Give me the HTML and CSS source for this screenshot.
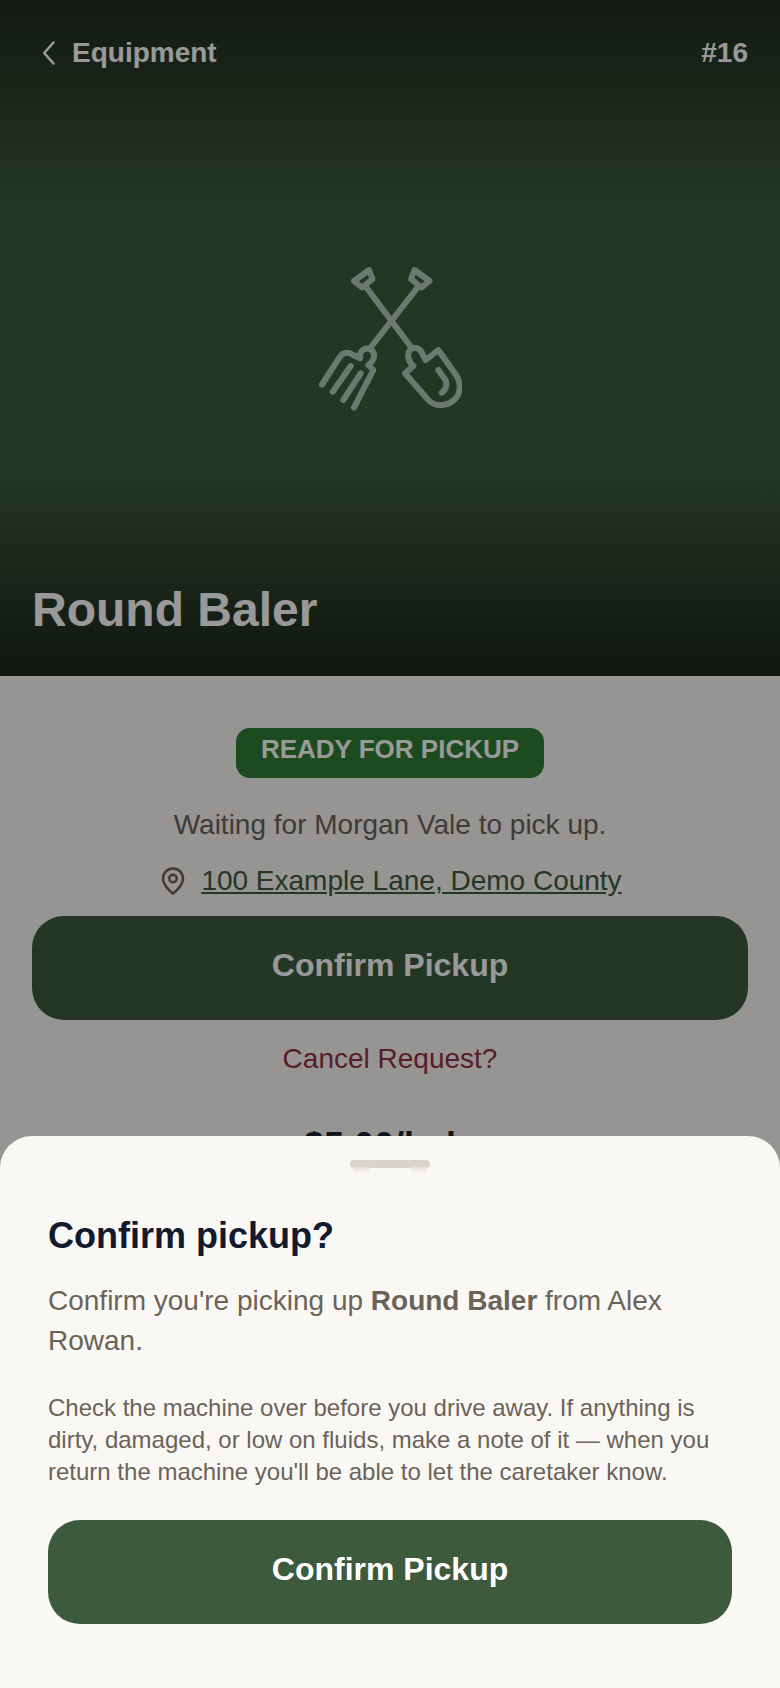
FILE: index.html
```html
<!DOCTYPE html>
<html lang="en">
<head>
<meta charset="utf-8">
<title>Round Baler</title>
<link rel="stylesheet" href="styles.css">
</head>
<body>
<main class="page">
  <header class="hero">
    <nav class="topbar">
      <a class="back">
        <svg class="back-icon" viewBox="0 0 24 24" fill="none" stroke="currentColor" stroke-width="2.2" stroke-linecap="round" stroke-linejoin="round"><path d="M15 3 7 12l8 9"/></svg>
        <span>Equipment</span>
      </a>
      <span class="num">#16</span>
    </nav>
    <div class="hero-art">
      <svg class="tools" viewBox="318 262 144 152" fill="none" stroke="currentColor" stroke-width="6" stroke-linecap="round" stroke-linejoin="round">
        <path d="M369 270 354 281 362 287.5 372.5 279Z"/>
        <path d="M414.5 270 429.5 281 421.5 287.5 411 279Z"/>
        <path d="M366 287 411 347"/>
        <path d="M418 287 371 347"/>
        <path d="M405 373.3 413.3 366C408 361 406.500 354 410 350 413.500 346.500 419 347.500 421.500 352L425.700 360 438.300 350 456 375C461 382 461 392 456 398 449 406 436 408 428.300 400Z"/>
        <path d="M438.300 370 445.500 380C447.500 384 446 390 441.700 392.700"/>
        <path d="M322 384.500 340 356.700C343 352.500 348 351.500 353.300 355L360 358.300C359 352.500 363 348.500 367 348.500 372.500 348.500 375.500 354 373.300 359 372 362 370 364 368.300 365L373.300 370 354 407.700"/>
        <path d="M350.700 366 332.700 391.700"/>
        <path d="M360.700 373.300 343.300 400"/>
      </svg>
    </div>
    <h1 class="title">Round Baler</h1>
  </header>

  <section class="content">
    <div class="badge">READY FOR PICKUP</div>
    <p class="waiting">Waiting for Morgan Vale to pick up.</p>
    <p class="address">
      <svg class="pin" viewBox="0 0 24 24" fill="none" stroke="currentColor" stroke-width="2" stroke-linecap="round" stroke-linejoin="round"><path d="M20 10c0 6-8 12-8 12s-8-6-8-12a8 8 0 0 1 16 0Z"/><circle cx="12" cy="10" r="3"/></svg>
      <a class="address-link">100 Example Lane, Demo County</a>
    </p>
    <button class="btn btn-hero">Confirm Pickup</button>
    <a class="cancel">Cancel Request?</a>
    <div class="price">$5.00/bale</div>
  </section>

  <div class="scrim"></div>

  <aside class="sheet">
    <div class="handle"></div>
    <h2 class="sheet-title">Confirm pickup?</h2>
    <p class="sheet-lead">Confirm you're picking up <strong>Round Baler</strong> from Alex Rowan.</p>
    <p class="sheet-note">Check the machine over before you drive away. If anything is dirty, damaged, or low on fluids, make a note of it — when you return the machine you'll be able to let the caretaker know.</p>
    <button class="btn btn-sheet">Confirm Pickup</button>
  </aside>
</main>
</body>
</html>
```
FILE: styles.css
```css
* { box-sizing: border-box; }
html, body { margin: 0; padding: 0; }
body { font-family: "Liberation Sans", Arial, sans-serif; background: #faf8f5; }
.page { position: relative; width: 780px; height: 1688px; overflow: hidden; }

.hero {
  height: 676px;
  display: flex;
  flex-direction: column;
  padding: 36px 32px 0;
  background: linear-gradient(180deg, #1f2b1f 0%, #3d5a3d 30%, #3d5a3d 70%, #1a261b 100%);
  color: #fff;
}
.topbar { display: flex; justify-content: space-between; align-items: center; height: 34px; font-size: 28px; font-weight: 700; }
.back { display: flex; align-items: center; gap: 8px; padding-left: 4px; }
.back-icon { width: 28px; height: 28px; }
.hero-art { display: flex; justify-content: center; margin-top: 192px; height: 152px; }
.tools { width: 144px; height: 152px; color: #b4cabb; }
.title { margin: auto 0 38px; font-size: 48px; line-height: 56px; font-weight: 700; }

.content { display: flex; flex-direction: column; align-items: center; padding: 52px 32px 0; }
.badge { width: 308px; height: 50px; padding-top: 6px; border-radius: 14px; background: #2e7d32; color: #fff; font-size: 26px; line-height: 30px; font-weight: 700; text-align: center; }
.waiting { margin: 31px 0 0; font-size: 28px; line-height: 32px; color: #6b6358; }
.address { display: flex; align-items: center; gap: 13px; margin: 24px 0 0; font-size: 28px; line-height: 32px; }
.pin { width: 30px; height: 30px; color: #6b6358; }
.address-link { color: #3d5a3d; text-decoration: underline; }
.btn { display: block; border: 0; padding: 0 0 6px; font-family: inherit; font-size: 32px; font-weight: 700; color: #fff; background: #3d5a3d; height: 104px; border-radius: 32px; }
.btn-hero { width: 716px; margin-top: 19px; }
.cancel { margin-top: 21px; font-size: 28px; line-height: 36px; color: #963040; }
.price { margin-top: 48px; font-size: 36px; line-height: 42px; font-weight: 700; color: #1a2233; }

.scrim { position: absolute; inset: 0; background: rgba(0, 0, 0, .4); }

.sheet { position: absolute; left: 0; right: 0; top: 1136px; bottom: 0; padding: 24px 48px 0; background: #faf8f5; border-radius: 32px 32px 0 0; }
.handle { position: relative; width: 80px; height: 8px; margin: 0 auto; border-radius: 4px; background: #d8d3cb; }
.handle::before, .handle::after { content: ""; position: absolute; top: 7px; width: 16px; height: 6px; background: linear-gradient(180deg, #e4e0d9, #faf8f5); }
.handle::before { left: 3px; }
.handle::after { right: 3px; }
.sheet-title { margin: 46px 0 0; font-size: 36px; line-height: 44px; font-weight: 700; color: #111a2e; }
.sheet-lead { margin: 23px 0 0; font-size: 28px; line-height: 40px; color: #6b6358; }
.sheet-note { margin: 31px 0 0; font-size: 24px; line-height: 32px; color: #6b6358; }
.btn-sheet { width: 684px; margin-top: 32px; }
```
